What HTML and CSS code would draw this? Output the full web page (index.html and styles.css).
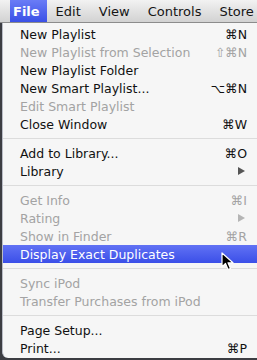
FILE: index.html
```html
<!DOCTYPE html>
<html lang="en">
<head>
    <meta charset="UTF-8">
    <title>File menu</title>
    <link rel="stylesheet" href="styles.css">
</head>
<body>
    <div class="menubar">
        <span class="bar-item active">File</span>
        <span class="bar-item">Edit</span>
        <span class="bar-item">View</span>
        <span class="bar-item">Controls</span>
        <span class="bar-item">Store</span>
    </div>

    <div class="menu">
        <div class="row"><span>New Playlist</span><span class="key">⌘N</span></div>
        <div class="row off"><span>New Playlist from Selection</span><span class="key">⇧⌘N</span></div>
        <div class="row"><span>New Playlist Folder</span></div>
        <div class="row"><span>New Smart Playlist...</span><span class="key">⌥⌘N</span></div>
        <div class="row off"><span>Edit Smart Playlist</span></div>
        <div class="row"><span>Close Window</span><span class="key">⌘W</span></div>
        <div class="sep"></div>
        <div class="row"><span>Add to Library...</span><span class="key">⌘O</span></div>
        <div class="row"><span>Library</span><span class="arrow"></span></div>
        <div class="sep"></div>
        <div class="row off"><span>Get Info</span><span class="key">⌘I</span></div>
        <div class="row off"><span>Rating</span><span class="arrow"></span></div>
        <div class="row off"><span>Show in Finder</span><span class="key">⌘R</span></div>
        <div class="row selected"><span>Display Exact Duplicates</span></div>
        <div class="sep"></div>
        <div class="row off"><span>Sync iPod</span></div>
        <div class="row off"><span>Transfer Purchases from iPod</span></div>
        <div class="sep"></div>
        <div class="row"><span>Page Setup...</span></div>
        <div class="row"><span>Print...</span><span class="key">⌘P</span></div>

        <!-- mouse pointer over the highlighted row -->
        <svg class="cursor" width="14" height="20" viewBox="0 0 14 20">
            <path d="M1 1 L1 15 L4.5 11.5 L7 17.5 L9.5 16.5 L7 10.8 L12 10.8 Z" fill="#000" stroke="#fff" stroke-width="1.2" stroke-linejoin="round"/>
        </svg>
    </div>
</body>
</html>
```

FILE: styles.css
```css
* {
    box-sizing: border-box;
}

body {
    margin: 0;
    width: 257px;
    height: 360px;
    overflow: hidden;
    background-color: #3c3d42;
    font-family: 'DejaVu Sans', sans-serif;
    color: #111;
}

.menubar {
    height: 23px;
    display: flex;
    align-items: stretch;
    padding-left: 10px;
    background: linear-gradient(to bottom, #f2f2f2, #d2d2d2);
    border-bottom: 1px solid #8c8c8c;
    white-space: nowrap;
    font-size: 13px;
}

.bar-item {
    display: flex;
    align-items: center;
    padding: 0 9px;
    color: #151515;
}

.bar-item.active {
    font-weight: bold;
    color: #fff;
    background: linear-gradient(to bottom, #6a7cf6, #3a50e6);
    padding: 0 7px 0 3px;
}

.menu {
    position: relative;
    height: 335px;
    margin-left: 2px;
    padding-top: 2px;
    background-color: #f6f6f6;
    border-left: 1px solid #b9bcc6;
    border-bottom-left-radius: 6px;
    font-size: 12.5px;
}

.row {
    height: 18px;
    display: flex;
    align-items: center;
    justify-content: space-between;
    padding: 0 10px 0 17px;
    white-space: nowrap;
}

.row.off {
    color: #a3a3a3;
}

.row.selected {
    color: #fff;
    background: linear-gradient(to bottom, #6172f4, #3b4fe8);
}

.arrow {
    width: 0;
    height: 0;
    margin-right: 2px;
    border-top: 4px solid transparent;
    border-bottom: 4px solid transparent;
    border-left: 7px solid #555;
}

.row.off .arrow {
    border-left-color: #b5b5b5;
}

.sep {
    height: 11px;
    display: flex;
    align-items: center;
}

.sep::before {
    content: "";
    flex: 1;
    height: 1px;
    background-color: #dcdcdc;
}

.cursor {
    position: absolute;
    left: 218px;
    top: 229px;
}
```
